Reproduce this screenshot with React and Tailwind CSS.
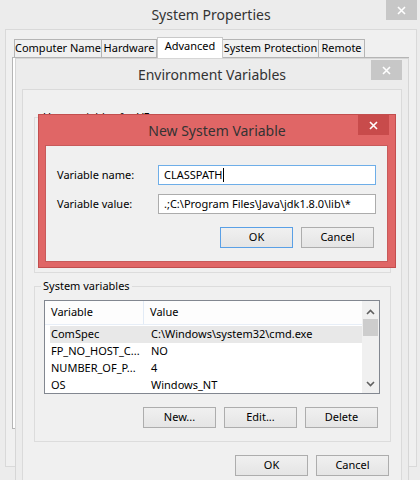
import React from 'react'

const font = { fontFamily: '"Segoe UI", "Noto Sans", "Open Sans", sans-serif' }

const CloseX = () => (
  <svg width="9" height="9" viewBox="0 0 9 9">
    <path d="M1 1L8 8M8 1L1 8" stroke="white" strokeWidth="1.6" />
  </svg>
)

const Btn = ({ children, focused }) => (
  <div
    className={`flex h-[21px] w-[73px] items-center justify-center border bg-gradient-to-b from-[#f0f0f0] to-[#e5e5e5] text-[11px] text-black ${
      focused ? 'border-[#5aa0e6]' : 'border-[#adadad]'
    }`}
  >
    {children}
  </div>
)

const Tab = ({ label, width, active }) =>
  active ? (
    <div
      className={`relative z-10 flex h-[21px] items-center justify-center whitespace-nowrap border border-b-0 border-[#c9c9c9] bg-white pb-[3px] text-[11px] text-black ${width}`}
    >
      {label}
    </div>
  ) : (
    <div
      className={`-ml-px flex h-[19px] items-center justify-center whitespace-nowrap border border-[#b5b5b5] bg-[#f0f0f0] text-[11px] text-black first:ml-0 ${width}`}
    >
      {label}
    </div>
  )

const rows = [
  ['ComSpec', 'C:\\Windows\\system32\\cmd.exe', true],
  ['FP_NO_HOST_C...', 'NO'],
  ['NUMBER_OF_P...', '4'],
  ['OS', 'Windows_NT'],
]

const ListView = () => (
  <div className="ml-[9px] mt-[6px] flex h-[94px] w-[336px] border border-[#828790] bg-white">
    <div className="flex-1 overflow-hidden">
      <div className="flex h-[24px] border-b border-[#e7eef7] bg-[#fdfdfd] text-[11px]">
        <div className="flex w-[99px] items-center border-r border-[#e2ebf6] pl-[6px]">Variable</div>
        <div className="flex flex-1 items-center pl-[6px]">Value</div>
      </div>
      <div className="pl-[5px]">
        {rows.map(([name, value, sel]) => (
          <div
            key={name}
            className={`flex h-[17px] items-center text-[11px] text-black ${sel ? 'mt-[1px] bg-[#e8e8e8]' : ''}`}
          >
            <div className="w-[100px] pl-[1px]">{name}</div>
            <div className="pl-[1px]">{value}</div>
          </div>
        ))}
      </div>
    </div>
    <div className="flex w-[17px] flex-col items-center bg-[#f0f0f0]">
      <svg width="9" height="6" viewBox="0 0 9 6" className="mt-[8px]">
        <path d="M1 5L4.5 1.5L8 5" stroke="#606060" strokeWidth="1.6" fill="none" />
      </svg>
      <div className="mt-[4px] h-[17px] w-[15px] bg-[#cdcdcd]" />
      <div className="flex-1" />
      <svg width="9" height="6" viewBox="0 0 9 6" className="mb-[6px]">
        <path d="M1 1L4.5 4.5L8 1" stroke="#606060" strokeWidth="1.6" fill="none" />
      </svg>
    </div>
  </div>
)

const NewVarDialog = () => (
  <div className="absolute left-[38px] top-[114px] flex h-[154px] w-[358px] flex-col border border-[#c24e4e] bg-[#e06666]">
    <div className="relative flex h-[30px] items-center justify-center pt-[1px] text-[14px] text-[#333]">
      New System Variable
      <div className="absolute right-[6px] top-0 flex h-[20px] w-[31px] items-center justify-center bg-[#c84b4b]">
        <CloseX />
      </div>
    </div>
    <div className="ml-[6px] h-[117px] w-[343px] border border-[#c85a5a] bg-[#f0f0f0]">
      <div className="mt-[19px] flex items-center">
        <div className="w-[112px] pl-[11px] text-[11px] text-black">Variable name:</div>
        <div className="flex h-[20px] w-[218px] items-center border border-[#6eaee8] bg-white pl-[5px] text-[11px] text-black">
          CLASSPATH
          <span className="ml-[1px] inline-block h-[14px] w-px bg-black" />
        </div>
      </div>
      <div className="mt-[9px] flex items-center">
        <div className="w-[112px] pl-[11px] text-[11px] text-black">Variable value:</div>
        <div className="flex h-[20px] w-[218px] items-center border border-[#acacac] bg-white pl-[5px] text-[11px] text-black">
          {'.;C:\\Program Files\\Java\\jdk1.8.0\\lib\\*'}
        </div>
      </div>
      <div className="ml-[174px] mt-[13px] flex gap-[8px]">
        <Btn focused>OK</Btn>
        <Btn>Cancel</Btn>
      </div>
    </div>
  </div>
)

const EnvWindow = () => (
  <div className="absolute left-[15px] top-[58px] flex h-[440px] w-[394px] flex-col border border-[#d6d6d6] bg-[#ececec]">
    <div className="relative flex h-[30px] items-center justify-center text-[14px] text-[#333]">
      Environment Variables
      <div className="absolute right-[6px] top-[1px] flex h-[20px] w-[31px] items-center justify-center bg-[#c7c7c7]">
        <CloseX />
      </div>
    </div>
    <div className="ml-[6px] flex w-[380px] flex-1 flex-col border border-[#dadada] bg-[#f0f0f0]">
      <fieldset className="ml-[11px] mt-[19px] h-[164px] w-[357px] border border-[#dcdcdc]">
        <legend className="ml-[6px] px-[2px] text-[11px] leading-[16px] text-black">User variables for VF</legend>
      </fieldset>
      <fieldset className="ml-[11px] mt-[5px] h-[164px] w-[357px] border border-[#dcdcdc]">
        <legend className="ml-[6px] px-[2px] text-[11px] leading-[16px] text-black">System variables</legend>
        <ListView />
        <div className="ml-[108px] mt-[13px] flex gap-[8px]">
          <Btn>New...</Btn>
          <Btn>Edit...</Btn>
          <Btn>Delete</Btn>
        </div>
      </fieldset>
      <div className="ml-[212px] mt-[13px] flex gap-[8px]">
        <Btn>OK</Btn>
        <Btn>Cancel</Btn>
      </div>
    </div>
  </div>
)

export default function App() {
  return (
    <div className="relative h-[480px] w-[420px] overflow-hidden bg-[#ececec]" style={font}>
      <div className="flex h-[29px] items-center justify-center pl-[2px] text-[14px] text-[#333]">
        System Properties
      </div>
      <div className="absolute right-[3px] top-0 flex h-[20px] w-[31px] items-center justify-center bg-[#c7c7c7]">
        <CloseX />
      </div>
      <div className="absolute left-[5px] top-[29px] h-[438px] w-[412px] border border-[#d9d9d9] bg-[#f0f0f0]">
        <div className="ml-[8px] mt-[7px] flex items-end">
          <Tab label="Computer Name" width="w-[88px]" />
          <Tab label="Hardware" width="w-[56px]" />
          <Tab label="Advanced" width="w-[66px]" active />
          <Tab label="System Protection" width="w-[97px]" />
          <Tab label="Remote" width="w-[47px]" />
        </div>
        <div className="ml-[6px] -mt-px h-[372px] w-[397px] border border-[#b5b5b5] bg-white" />
      </div>
      <EnvWindow />
      <NewVarDialog />
    </div>
  )
}
